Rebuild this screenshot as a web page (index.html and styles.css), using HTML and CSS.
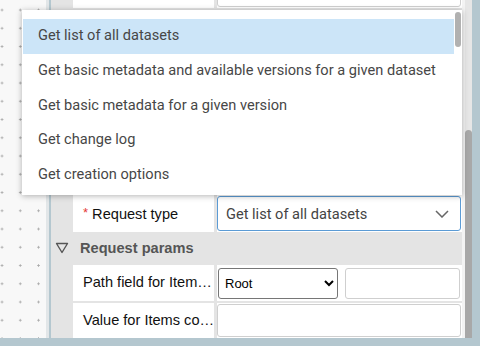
FILE: index.html
```html
<!DOCTYPE html>
<html lang="en">
<head>
    <meta charset="UTF-8">
    <meta name="viewport" content="width=device-width, initial-scale=1.0">
    <title>Request settings</title>
    <link rel="stylesheet" href="styles.css">
</head>
<body>
    <div class="app">
        <div class="canvas"></div>
        <div class="panel">
            <div class="rows">
                <!-- rows above, covered by the open menu -->
                <div class="row"><div class="label"></div><div class="value"><div class="text-input"></div></div></div>
                <div class="row"><div class="label"></div><div class="value"><div class="text-input"></div></div></div>
                <div class="row"><div class="label"></div><div class="value"><div class="text-input"></div></div></div>
                <div class="row"><div class="label"></div><div class="value"><div class="text-input"></div></div></div>
                <div class="row"><div class="label"></div><div class="value"><div class="text-input"></div></div></div>
                <div class="row"><div class="label"></div><div class="value"><div class="text-input"></div></div></div>

                <div class="row">
                    <div class="label"><span class="req">*</span> Request type</div>
                    <div class="value">
                        <div class="picker focused">
                            <span>Get list of all datasets</span>
                            <svg width="14" height="8" viewBox="0 0 14 8"><polyline points="1,1 7,7 13,1" fill="none" stroke="#666" stroke-width="1.5"/></svg>
                        </div>
                    </div>
                </div>

                <div class="section">
                    <svg class="caret" width="14" height="12" viewBox="0 0 14 12"><polygon points="1.5,1.5 12.5,1.5 7,10.5" fill="none" stroke="#555" stroke-width="1.4" stroke-linejoin="round"/></svg>
                    Request params
                </div>

                <div class="row tall">
                    <div class="label">Path field for Item…</div>
                    <div class="value split">
                        <select class="native">
                            <option>Root</option>
                        </select>
                        <div class="text-input small"></div>
                    </div>
                </div>

                <div class="row">
                    <div class="label">Value for Items co…</div>
                    <div class="value"><div class="text-input"></div></div>
                </div>
            </div>
        </div>
        <div class="track"><div class="thumb"></div></div>

        <div class="menu">
            <div class="menu-item active">Get list of all datasets</div>
            <div class="menu-item">Get basic metadata and available versions for a given dataset</div>
            <div class="menu-item">Get basic metadata for a given version</div>
            <div class="menu-item">Get change log</div>
            <div class="menu-item">Get creation options</div>
            <div class="menu-thumb"></div>
        </div>
    </div>
</body>
</html>
```

FILE: styles.css
```css
body {
    margin: 0;
    padding: 0;
    background-color: #b4c7cf;
    font-family: "Liberation Sans", Arial, sans-serif;
    font-size: 14.6px;
}
.app {
    position: relative;
    display: flex;
    width: 472px;
    height: 338px;
    overflow: hidden;
}
.canvas {
    width: 46px;
    flex: none;
    border-right: 3px solid #e2e6e8;
    margin-right: 2px;
    background-color: #f8f8f8;
    background-image: radial-gradient(circle, #a9a9a9 0.9px, transparent 1.2px);
    background-size: 18.25px 18.25px;
    background-position: -7.1px 0.9px;
}
.panel {
    width: 411px;
    flex: none;
    background-color: #e4e4e4;
    overflow: hidden;
}
.rows {
    display: flex;
    flex-direction: column;
    gap: 2px;
    margin-top: -27px;
}
.row {
    display: grid;
    grid-template-columns: 141px 245px;
    column-gap: 3px;
    height: 35px;
    margin-left: 22px;
}
.row.tall {
    height: 36px;
}
.label {
    background-color: #fff;
    color: #111;
    padding-left: 10px;
    line-height: 35px;
    white-space: nowrap;
}
.req {
    color: #e53935;
    font-size: 13px;
    vertical-align: 2px;
}
.value {
    background-color: #fff;
    display: flex;
    align-items: stretch;
}
.value.split {
    padding: 3px 2px 2px 1px;
    gap: 7px;
}
.text-input {
    flex: 1;
    border: 1px solid #cfcfcf;
    border-radius: 3px;
    background-color: #fff;
    margin: 1px 1px 1px 0;
}
.text-input.small {
    margin: 0;
}
.picker {
    flex: 1;
    display: flex;
    align-items: center;
    justify-content: space-between;
    margin: 1px 1px 1px 0;
    padding: 0 11px 0 8px;
    border: 1px solid #5b9bd5;
    border-radius: 3px;
    font-family: Roboto, "Liberation Sans", sans-serif;
    color: #444;
}
.native {
    width: 120px;
    height: 31px;
    font-family: "Liberation Sans", Arial, sans-serif;
    font-size: 13px;
    color: #000;
    border: 1px solid #767676;
    border-radius: 3px;
    background-color: #fff;
    padding: 0 2px;
}
.section {
    height: 31px;
    display: flex;
    align-items: center;
    padding-left: 4px;
    gap: 11px;
    font-weight: bold;
    color: #555;
}
.track {
    width: 10px;
    flex: none;
    position: relative;
    background-color: #e6e6e6;
    border-left: 3px solid #f3f3f3;
    box-sizing: border-box;
}
.thumb {
    position: absolute;
    left: 0;
    right: 0;
    top: 130px;
    bottom: -4px;
    background-color: #a8a8a8;
    border-radius: 4px;
}
.menu {
    position: absolute;
    left: 22px;
    top: 10px;
    width: 440px;
    height: 185px;
    box-sizing: border-box;
    padding: 9px 8px 0 1px;
    background-color: #fff;
    box-shadow: 0 1px 6px rgba(0, 0, 0, 0.3);
    font-family: Roboto, "Liberation Sans", sans-serif;
    color: #474747;
    overflow: hidden;
}
.menu-item {
    height: 34.75px;
    line-height: 32px;
    padding-left: 15px;
    white-space: nowrap;
}
.menu-item.active {
    background-color: #cce5f8;
}
.menu-thumb {
    position: absolute;
    right: 1px;
    top: 2px;
    width: 6px;
    height: 35px;
    background-color: #b1b1b1;
    border-radius: 3px;
}
```
